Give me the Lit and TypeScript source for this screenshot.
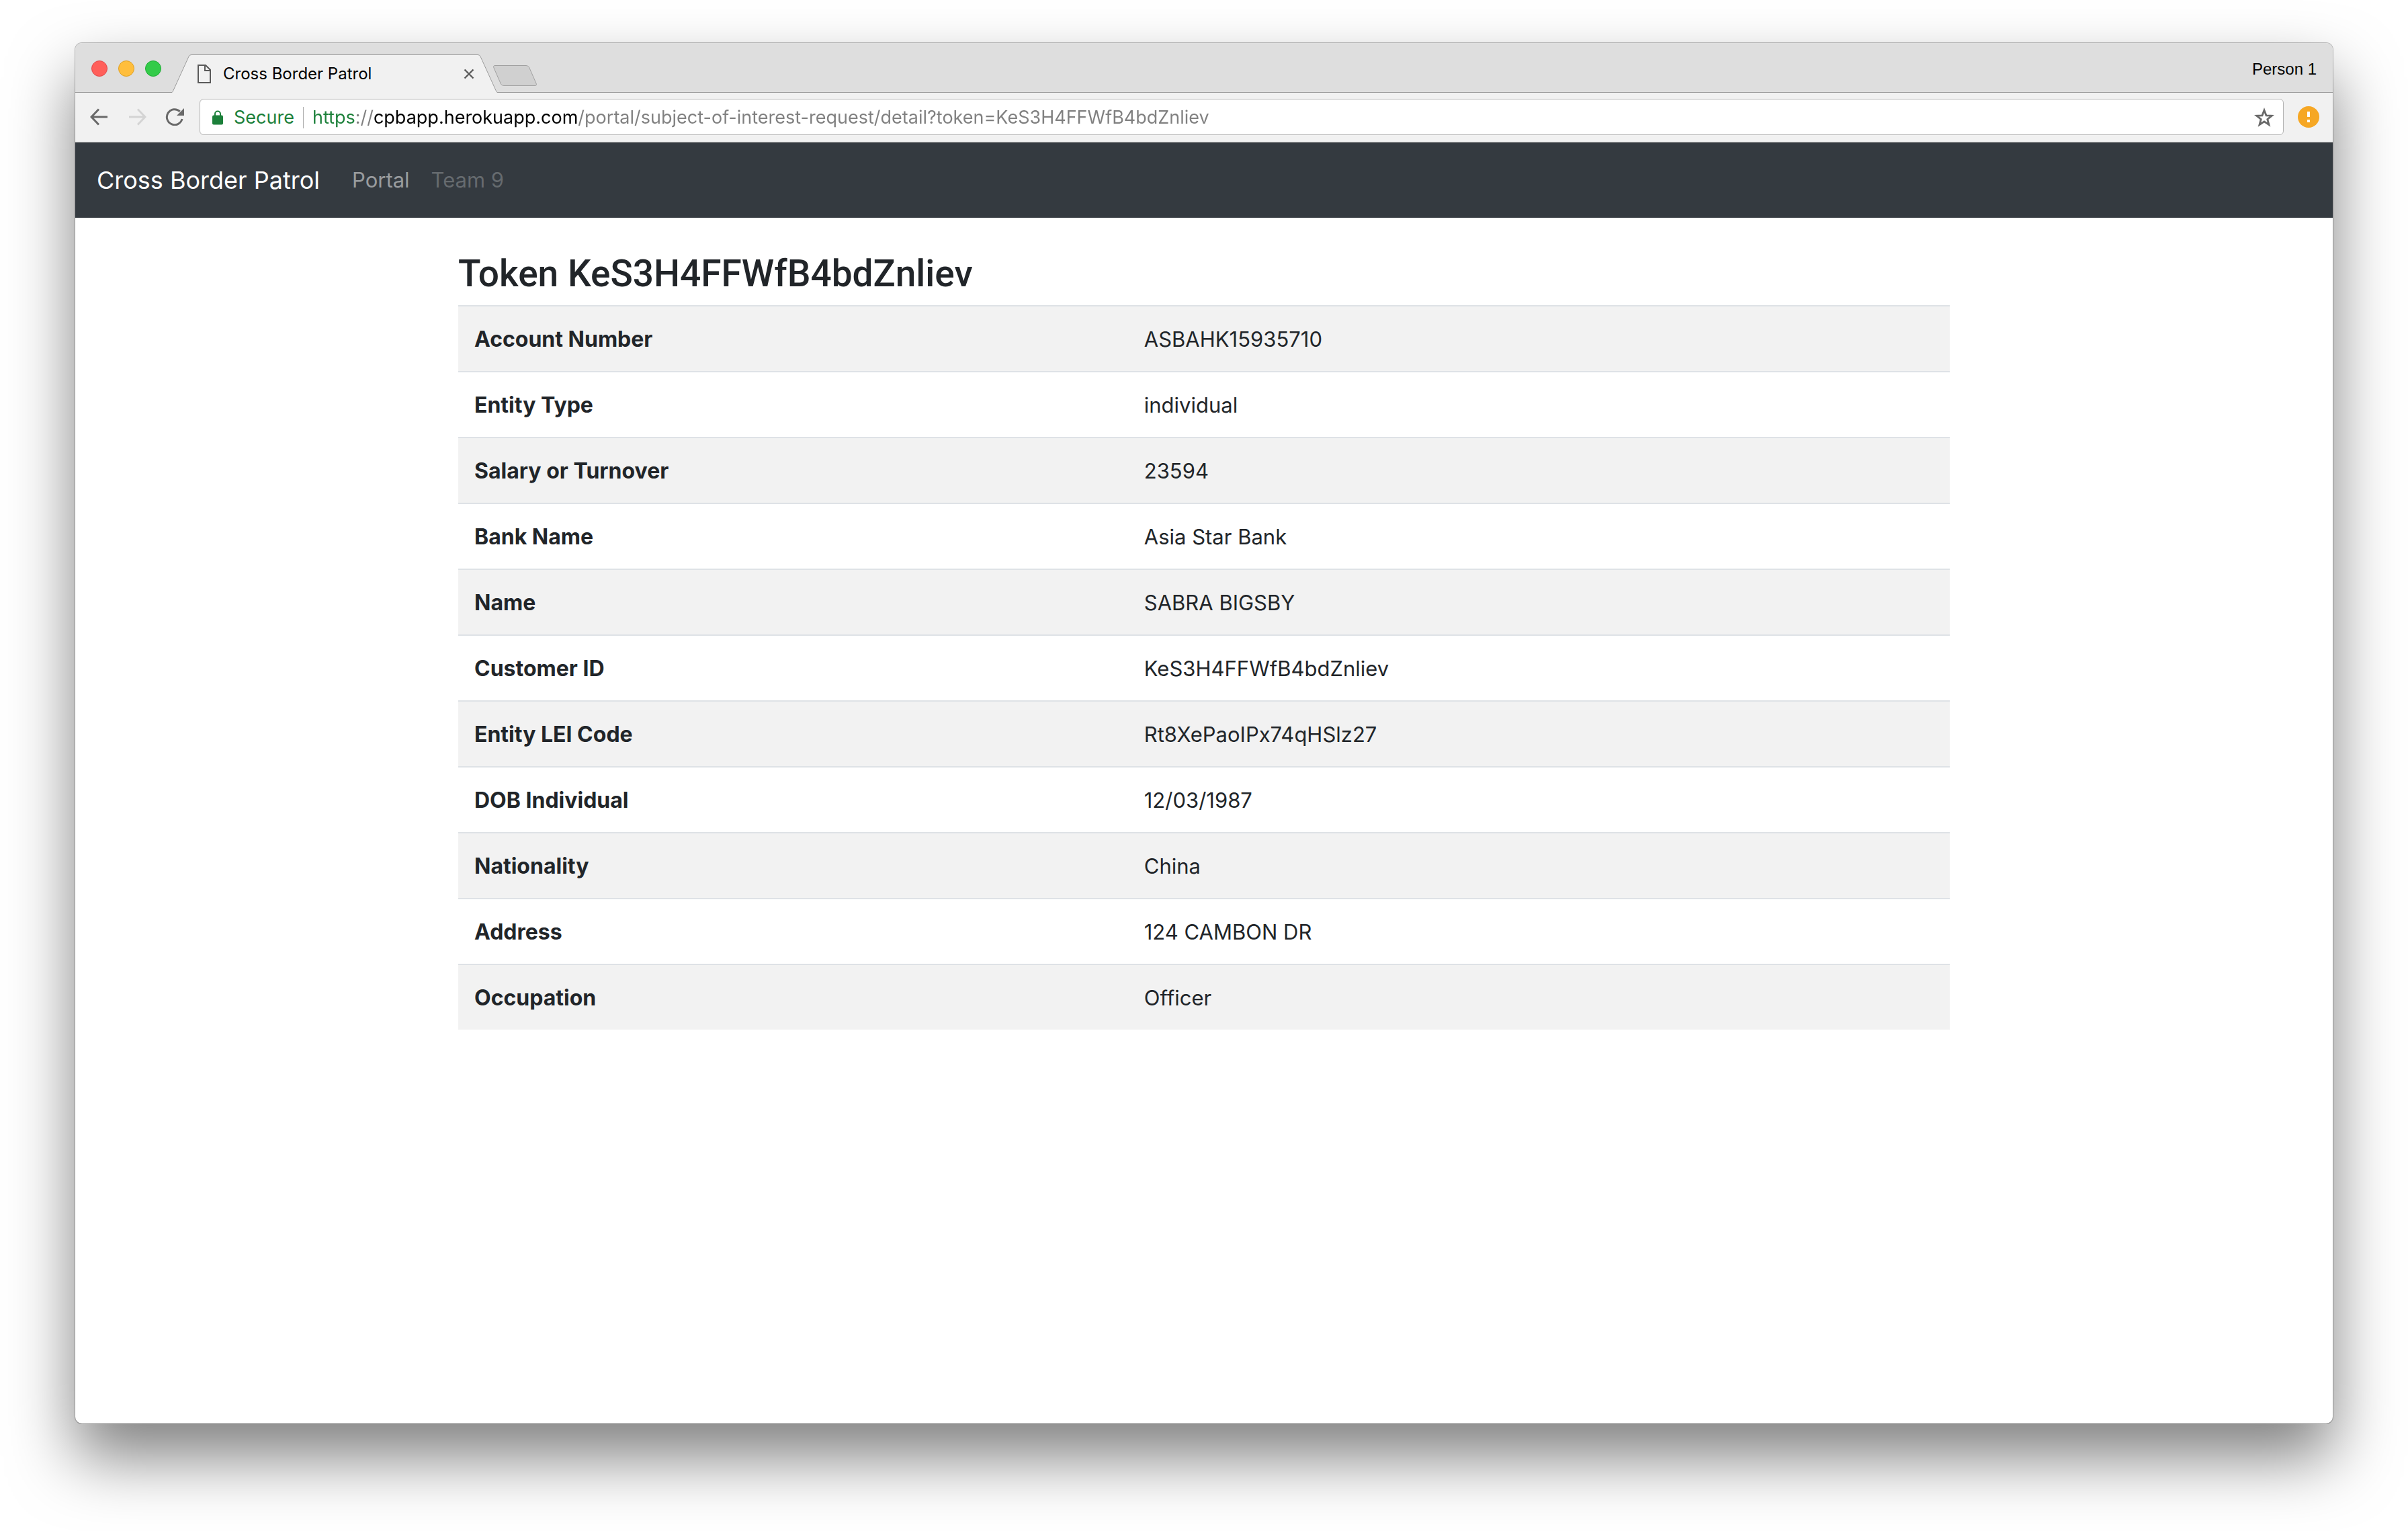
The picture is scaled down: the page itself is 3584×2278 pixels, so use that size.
import { LitElement, html, css, svg } from "lit";
import { customElement, query, state } from "lit/decorators.js";
import { styleMap } from "lit/directives/style-map.js";

const details: [string, string][] = [
  ["Account Number", "ASBAHK15935710"],
  ["Entity Type", "individual"],
  ["Salary or Turnover", "23594"],
  ["Bank Name", "Asia Star Bank"],
  ["Name", "SABRA BIGSBY"],
  ["Customer ID", "KeS3H4FFWfB4bdZnliev"],
  ["Entity LEI Code", "Rt8XePaoIPx74qHSlz27"],
  ["DOB Individual", "12/03/1987"],
  ["Nationality", "China"],
  ["Address", "124 CAMBON DR"],
  ["Occupation", "Officer"],
];

const arrow = svg`<path d="M13 1.5 2 13 13 24.500M2.500 13H26" fill="none" stroke="currentColor" stroke-width="3"/>`;

@customElement("browser-tabs")
class BrowserTabs extends LitElement {
  static styles = css`
    :host {
      display: flex;
      height: 74px;
      background: linear-gradient(#9b9b9b, #9b9b9b) bottom / 100% 1px no-repeat #dedede;
      color: #000;
    }
    button {
      padding: 0;
      border: 0;
      background: none;
      color: inherit;
      font: inherit;
    }
    .lights {
      display: flex;
      align-items: center;
      gap: 16px;
      padding: 2px 16px 0 24px;
    }
    .light {
      width: 24px;
      height: 24px;
      border-radius: 50%;
      border: 1px solid;
    }
    .close { background: #ff5f5a; border-color: #e2474a; }
    .minimize { background: #ffbe3c; border-color: #dfa023; }
    .zoom { background: #33cb49; border-color: #20ac36; }
    .tab {
      display: grid;
      width: 484px;
    }
    .tab > * { grid-area: 1 / 1; }
    .shape { display: block; align-self: end; }
    .content {
      display: flex;
      align-items: center;
      padding: 18px 34px 0 38px;
    }
    .title {
      flex: 1;
      padding-left: 18px;
      text-align: left;
      font-size: 24px;
      line-height: 28px;
    }
    .content svg { display: block; }
    .new { align-self: start; padding: 32px 0 0 0; margin-left: -7px; }
    .new svg { display: block; }
    .person {
      margin-left: auto;
      padding: 4px 24px 0 0;
      font-family: "Liberation Sans", Arial, sans-serif;
      font-size: 24px;
    }
  `;
  render() {
    return html`
      <div class="lights">
        <button class="light close" aria-label="Close"></button>
        <button class="light minimize" aria-label="Minimize"></button>
        <button class="light zoom" aria-label="Zoom"></button>
      </div>
      <div class="tab">
        <svg class="shape" width="484" height="57" viewBox="0 0 484 57" aria-hidden="true">
          <path d="M0 57V56.500Q1 56 2 53.500L25 3Q26 .5 29 .5H455Q458 .5 459 3L482 53.500Q483 56 484 56.500V57Z" fill="#f1f1f1"/>
          <path d="M0 56.500Q1 56 2 53.500L25 3Q26 .5 29 .5H455Q458 .5 459 3L482 53.500Q483 56 484 56.500" fill="none" stroke="#9b9b9b"/>
        </svg>
        <div class="content">
          <svg width="20" height="28" viewBox="0 0 20 28" aria-hidden="true">
            <path d="M1 1H12L19 8V27H1ZM11 1V9H19" fill="none" stroke="#5a5a5a" stroke-width="2"/>
          </svg>
          <button class="title">Cross Border Patrol</button>
          <button aria-label="Close tab">
            <svg width="16" height="16" viewBox="0 0 16 16"><path d="M1.500 1.500 14.500 14.500M14.500 1.500 1.500 14.500" stroke="#5a5a5a" stroke-width="2.400"/></svg>
          </button>
        </div>
      </div>
      <button class="new" aria-label="New tab">
        <svg width="68" height="34" viewBox="0 0 68 34">
          <path d="M4 1.500H50Q53 1.500 54.500 4L65 28Q66.500 31.500 63 31.500H17Q14 31.500 12.500 29L2 5Q.5 1.500 4 1.500Z" fill="#d0d0d0" stroke="#a0a0a0"/>
        </svg>
      </button>
      <button class="person">Person 1</button>
    `;
  }
}

const scheme = "https";
const host = "cpbapp.herokuapp.com";
const path = "/portal/subject-of-interest-request/detail?token=KeS3H4FFWfB4bdZnliev";

@customElement("browser-toolbar")
class BrowserToolbar extends LitElement {
  static styles = css`
    :host {
      display: flex;
      align-items: center;
      height: 74px;
      box-sizing: border-box;
      padding: 0 20px 1px 22px;
      border-bottom: 1px solid #b4b4b4;
      background: #f1f1f1;
      color: #696969;
    }
    button {
      display: block;
      padding: 0;
      border: 0;
      background: none;
      color: inherit;
      font: inherit;
    }
    svg { display: block; }
    .nav {
      display: flex;
      gap: 28px;
      padding-right: 23px;
    }
    .forward { color: #d4d4d4; }
    .flip { transform: scaleX(-1); }
    .box {
      flex: 1;
      display: flex;
      align-items: center;
      height: 54px;
      box-sizing: border-box;
      border: 1px solid #b4b4b4;
      border-radius: 6px;
      padding: 2px 13px 0 18px;
      margin-right: 21px;
      background: #fff;
      font-size: 27px;
    }
    .secure {
      display: flex;
      align-items: center;
      gap: 16px;
      padding-right: 13px;
      color: #1c803a;
    }
    .rule {
      width: 1px;
      height: 32px;
      margin-right: 13px;
      background: #b0b0b0;
    }
    .url {
      flex: 1;
      min-width: 0;
      height: 40px;
      margin: 0;
      padding: 0;
      border: 0;
      outline: 0;
      font: inherit;
      color: transparent;
      background: linear-gradient(
        90deg,
        #1c803a 0 var(--scheme-end),
        #808080 var(--scheme-end) var(--host-start),
        #000 var(--host-start) var(--host-end),
        #808080 var(--host-end)
      );
      -webkit-background-clip: text;
      background-clip: text;
    }
  `;

  @query(".url") url!: HTMLInputElement;
  @state() stops: Record<string, string> = {
    "--scheme-end": "0px",
    "--host-start": "0px",
    "--host-end": "0px",
  };

  // The parts of the address are coloured by a gradient clipped to the text,
  // with its stops at the measured end of each part.
  firstUpdated() {
    const context = document.createElement("canvas").getContext("2d")!;
    const style = getComputedStyle(this.url);
    context.font = `${style.fontSize} ${style.fontFamily}`;
    const end = (text: string) => `${Math.round(context.measureText(text).width)}px`;
    this.stops = {
      "--scheme-end": end(scheme),
      "--host-start": end(`${scheme}://`),
      "--host-end": end(`${scheme}://${host}`),
    };
  }

  render() {
    return html`
      <div class="nav">
        <button aria-label="Back"><svg width="28" height="26" viewBox="0 0 28 26">${arrow}</svg></button>
        <button class="forward" aria-label="Forward" disabled><svg class="flip" width="28" height="26" viewBox="0 0 28 26">${arrow}</svg></button>
        <button aria-label="Reload">
          <svg width="28" height="26" viewBox="0 0 28 26">
            <path d="M25 16A11.500 11.500 0 1 1 21.700 4.800" fill="none" stroke="currentColor" stroke-width="3"/>
            <path d="M28 0V11H17Z" fill="currentColor"/>
          </svg>
        </button>
      </div>
      <div class="box">
        <button class="secure">
          <svg width="16" height="22" viewBox="0 0 16 22" aria-hidden="true">
            <path d="M4 8V5.500A4 4 0 0 1 12 5.500V8" fill="none" stroke="currentColor" stroke-width="2"/>
            <rect y="7.500" width="16" height="14" rx="2" fill="currentColor"/>
          </svg>
          Secure
        </button>
        <span class="rule"></span>
        <input class="url" type="text" aria-label="Address" spellcheck="false"
          style=${styleMap(this.stops)} .value=${`${scheme}://${host}${path}`}>
        <button aria-label="Bookmark this page">
          <svg width="30" height="30" viewBox="0 0 30 30">
            <path d="M15 4 18 11.800 26.300 12.200 19.800 17.400 22 25.500 15 20.900 8 25.500 10.200 17.400 3.700 12.200 12 11.800Z" fill="none" stroke="currentColor" stroke-width="2.800"/>
          </svg>
        </button>
      </div>
      <button aria-label="Update available">
        <svg width="32" height="32" viewBox="0 0 32 32">
          <circle cx="16" cy="16" r="16" fill="#f6a724"/>
          <path d="M14 8H18V16H14ZM14 20H18V24H14Z" fill="#fff"/>
        </svg>
      </button>
    `;
  }
}

@customElement("app-root")
class AppRoot extends LitElement {
  static styles = css`
    :host {
      display: flex;
      box-sizing: border-box;
      min-height: 100vh;
      padding: 64px 112px 160px;
      background: #fff;
      color: #212529;
      font-family: Inter, "Liberation Sans", sans-serif;
      font-size: 31px;
      line-height: 48px;
    }
    .window {
      flex: 1;
      min-width: 0;
      overflow: hidden;
      border-radius: 10px;
      background: #fff;
      box-shadow: 0 0 0 1px rgba(0, 0, 0, 0.25), 0 50px 96px rgba(0, 0, 0, 0.5);
    }
    .navbar {
      display: flex;
      align-items: center;
      height: 112px;
      padding: 0 32px;
      background: #343a40;
    }
    .navbar a {
      color: rgba(255, 255, 255, 0.5);
      text-decoration: none;
      padding: 0 16px;
    }
    .navbar .brand {
      padding: 0;
      margin-right: 32px;
      color: #fff;
      font-size: 36px;
    }
    .navbar .muted { color: rgba(255, 255, 255, 0.25); }
    .container {
      box-sizing: border-box;
      max-width: 2280px;
      margin: 0 auto;
      padding: 50px 30px;
    }
    h3 {
      margin: 0 0 14px;
      font-family: Roboto, sans-serif;
      font-size: 55px;
      font-weight: 500;
      line-height: 66px;
    }
    table {
      width: 100%;
      border-collapse: separate;
      border-spacing: 0;
    }
    th,
    td {
      padding: 25px 24px 23px;
      border-top: 2px solid #dee2e6;
      text-align: left;
    }
    th {
      width: 44.9%;
      box-sizing: border-box;
      font-size: 32px;
      font-weight: 700;
    }
    tr:nth-child(odd) > * { background: #f2f2f2; }
  `;
  render() {
    return html`
      <div class="window">
        <browser-tabs></browser-tabs>
        <browser-toolbar></browser-toolbar>
        <nav class="navbar">
          <a class="brand" href="#">Cross Border Patrol</a>
          <a href="#portal">Portal</a>
          <a class="muted" href="#team">Team 9</a>
        </nav>
        <main class="container">
          <h3>Token KeS3H4FFWfB4bdZnliev</h3>
          <table>
            <tbody>
              ${details.map(([name, value]) => html`<tr><th scope="row">${name}</th><td>${value}</td></tr>`)}
            </tbody>
          </table>
        </main>
      </div>
    `;
  }
}
